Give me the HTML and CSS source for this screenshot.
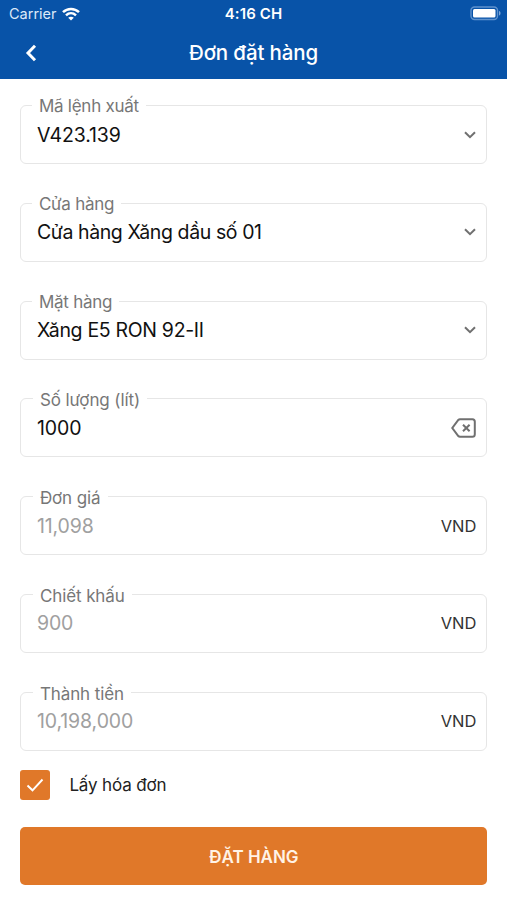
FILE: index.html
```html
<!DOCTYPE html>
<html lang="vi">
<head>
    <meta charset="UTF-8">
    <meta name="viewport" content="width=device-width, initial-scale=1">
    <title>Đơn đặt hàng</title>
    <link rel="stylesheet" href="styles.css">
</head>
<body>
    <header class="header">
        <div class="status-bar">
            <div class="carrier">
                <span>Carrier</span>
                <svg class="wifi" width="18" height="14" viewBox="0 0 18 14" fill="none" stroke="#fff" stroke-width="2.5">
                    <path d="M1 5.2C5.5.8 12.5.8 17 5.2"/>
                    <path d="M4 8.3c2.9-2.7 7.1-2.7 10 0"/>
                    <path d="M9 13.6 6.2 10.8c1.6-1.5 4-1.5 5.6 0z" fill="#fff" stroke="none"/>
                </svg>
            </div>
            <span class="time">4:16 CH</span>
            <svg class="battery" width="31" height="15" viewBox="0 0 31 15">
                <rect x="1" y="1" width="26.5" height="12.5" rx="3.5" fill="none" stroke="#5f92cd" stroke-width="1.4"/>
                <rect x="3" y="3" width="22.5" height="8.5" rx="1.5" fill="#fff"/>
                <path d="M29 5c2 .6 2 3.9 0 4.5z" fill="#7ea7d8"/>
            </svg>
        </div>
        <div class="nav-bar">
            <svg class="back" width="12" height="18" viewBox="0 0 12 18" fill="none" stroke="#fff" stroke-width="3">
                <path d="M10 1.800 3 9l7 7.200"/>
            </svg>
            <h1 class="title">Đơn đặt hàng</h1>
        </div>
    </header>

    <main class="form">
        <div class="field select">
            <span class="label">Mã lệnh xuất</span>
            <span class="value code">V423.139</span>
            <svg class="chevron" width="12" height="8" viewBox="0 0 12 8"><path d="M1 1.200l5 5 5-5"/></svg>
        </div>
        <div class="field select">
            <span class="label">Cửa hàng</span>
            <span class="value">Cửa hàng Xăng dầu số 01</span>
            <svg class="chevron" width="12" height="8" viewBox="0 0 12 8"><path d="M1 1.200l5 5 5-5"/></svg>
        </div>
        <div class="field select">
            <span class="label">Mặt hàng</span>
            <span class="value product">Xăng E5 RON 92-II</span>
            <svg class="chevron" width="12" height="8" viewBox="0 0 12 8"><path d="M1 1.200l5 5 5-5"/></svg>
        </div>
        <div class="field input">
            <span class="label">Số lượng (lít)</span>
            <span class="value">1000</span>
            <svg class="clear" width="25" height="20" viewBox="0 0 25 20">
                <path d="M9 1.200h12.500q2.300 0 2.300 2.500v12.600q0 2.500-2.300 2.500H9q-1 0-1.700-.8L1.300 10l6-8q.7-.8 1.700-.8z"/>
                <path d="M12 6.700l6.600 6.600M18.600 6.700l-6.600 6.600"/>
            </svg>
        </div>
        <div class="field input disabled">
            <span class="label">Đơn giá</span>
            <span class="value">11,098</span>
            <span class="unit">VND</span>
        </div>
        <div class="field input disabled">
            <span class="label">Chiết khấu</span>
            <span class="value">900</span>
            <span class="unit">VND</span>
        </div>
        <div class="field input disabled">
            <span class="label">Thành tiền</span>
            <span class="value">10,198,000</span>
            <span class="unit">VND</span>
        </div>

        <div class="invoice">
            <span class="checkbox">
                <svg width="18" height="14" viewBox="0 0 18 14" fill="none" stroke="#fff" stroke-width="1.900">
                    <path d="M1.500 7.500l5 4.800L16.500 1.500"/>
                </svg>
            </span>
            <span class="invoice-text">Lấy hóa đơn</span>
        </div>

        <button class="submit" type="button">ĐẶT HÀNG</button>
    </main>
</body>
</html>
```
FILE: styles.css
```css
* {
    box-sizing: border-box;
}
body {
    margin: 0;
    background-color: #fff;
    color: #111;
    font-family: Inter, "Liberation Sans", sans-serif;
}
.header {
    height: 79px;
    background-color: #0853a8;
    color: #fff;
}
.status-bar {
    display: grid;
    grid-template-columns: 1fr auto 1fr;
    align-items: center;
    height: 27px;
    padding: 0 6px 0 9px;
}
.carrier {
    display: flex;
    align-items: center;
    gap: 5px;
    font-size: 14.5px;
    color: #dce9f8;
}
.time {
    margin-left: -3px;
    font-size: 15px;
    font-weight: 600;
    letter-spacing: 0.1px;
}
.battery {
    justify-self: end;
}
.nav-bar {
    display: grid;
    grid-template-columns: 1fr auto 1fr;
    align-items: center;
    height: 51px;
    padding: 0 25px;
}
.title {
    margin: 0;
    font-size: 20.5px;
    font-weight: 550;
    letter-spacing: -0.15px;
}
.form {
    padding: 26px 19.6px 0 20.4px;
}
.field {
    position: relative;
    display: flex;
    align-items: center;
    justify-content: space-between;
    height: 59px;
    margin-bottom: 38.8px;
    padding: 0 10px 0 15.5px;
    border: 1.5px solid #e6e6e6;
    border-radius: 6px;
}
.label {
    position: absolute;
    top: -11px;
    left: 10.5px;
    padding: 0 7px;
    background-color: #fff;
    color: #777;
    font-size: 17px;
    line-height: 22px;
    letter-spacing: -0.25px;
}
.input .label {
    top: -10px;
    left: 11.5px;
    letter-spacing: -0.1px;
}
.value {
    font-size: 19.5px;
    letter-spacing: -0.1px;
}
.select .value {
    letter-spacing: -0.4px;
}
.select .code {
    letter-spacing: -0.15px;
}
.select .product {
    letter-spacing: -0.32px;
}
.disabled .value {
    color: #a0a0a0;
}
.chevron {
    fill: none;
    stroke: #707070;
    stroke-width: 2;
}
.clear {
    fill: none;
    stroke: #707070;
    stroke-width: 2;
}
.unit {
    font-size: 16.5px;
    color: #333;
}
.invoice {
    display: flex;
    align-items: center;
    gap: 19px;
    margin-top: -19.8px;
}
.checkbox {
    display: flex;
    align-items: center;
    justify-content: center;
    width: 30px;
    height: 30px;
    border-radius: 3px;
    background-color: #e07829;
}
.invoice-text {
    font-size: 17px;
    letter-spacing: -0.15px;
    color: #222;
}
.submit {
    width: 100%;
    height: 58.5px;
    margin-top: 27px;
    padding-top: 2px;
    border: none;
    border-radius: 5px;
    background-color: #e07829;
    color: #fff3e6;
    font-family: inherit;
    font-size: 17px;
    font-weight: 600;
}
```
